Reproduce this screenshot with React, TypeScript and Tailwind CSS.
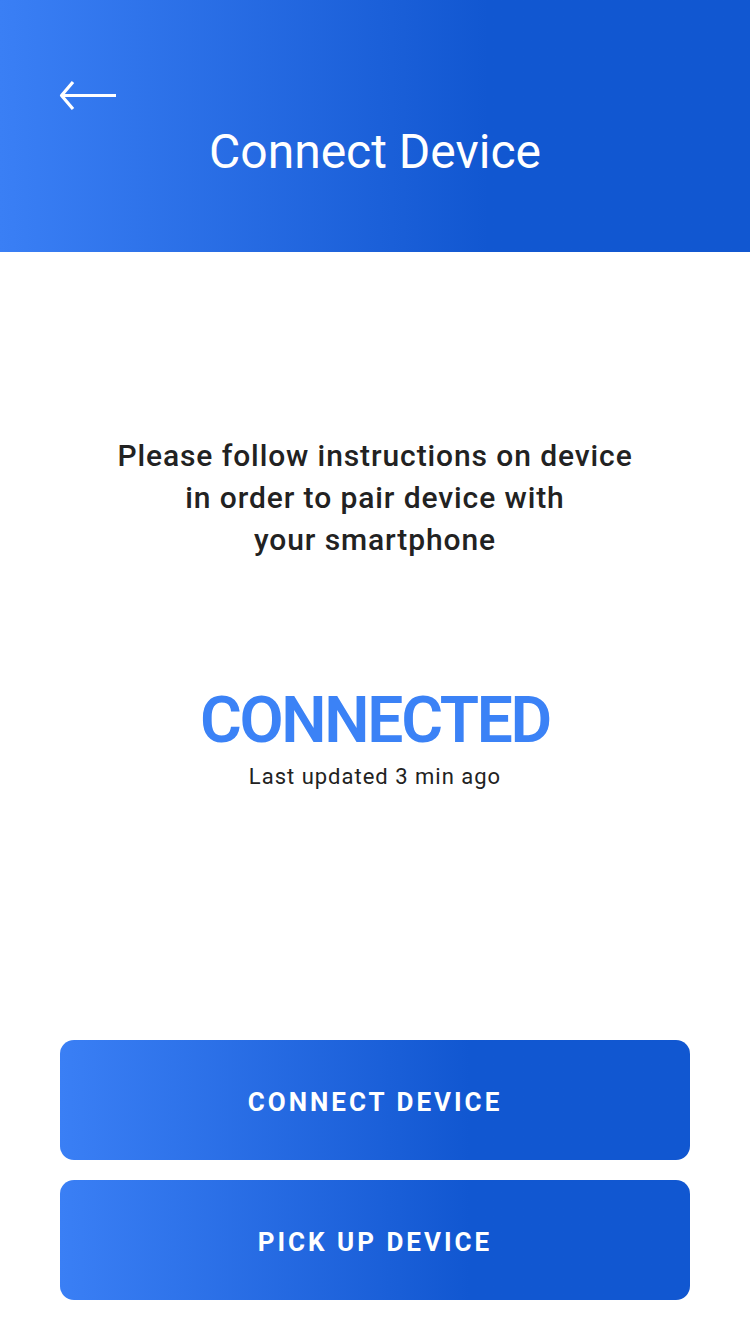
import type { ReactNode } from "react";

const font = { fontFamily: "Roboto, 'Noto Sans', sans-serif" };

function BackArrow() {
  return (
    <svg width="60" height="34" viewBox="0 0 60 34" fill="none" aria-hidden="true" className="block">
      <path
        d="M58 15.5H3.5M15 2L3.5 15.5L15 29"
        stroke="white"
        strokeWidth="3.2"
        strokeLinecap="butt"
        strokeLinejoin="round"
      />
    </svg>
  );
}

function GradientButton({ children }: { children: ReactNode }) {
  return (
    <button
      type="button"
      className="flex h-[120px] w-full items-center justify-center rounded-[14px] bg-linear-to-r from-[#3a7ff5] from-0% to-[#1157d1] to-65% pt-[4px] text-[26px] font-bold tracking-[3px] text-white"
    >
      {children}
    </button>
  );
}

export default function App() {
  return (
    <div className="flex min-h-screen flex-col bg-white" style={font}>
      <header className="flex h-[252px] flex-col bg-linear-to-r from-[#3a7ff5] from-0% to-[#1157d1] to-65%">
        <button type="button" aria-label="Back" className="ml-[58px] mt-[80px] self-start">
          <BackArrow />
        </button>
        <h1 className="mt-[10px] text-center text-[48px] font-normal leading-[56px] text-white">
          Connect Device
        </h1>
      </header>

      <main className="flex flex-1 flex-col items-center">
        <p className="mt-[183px] text-center text-[30px] font-medium leading-[42px] tracking-[0.9px] text-[#222222]">
          Please follow instructions on device
          <br />
          in order to pair device with
          <br />
          your smartphone
        </p>

        <div className="mt-[128px] text-[64px] font-semibold leading-[64px] tracking-[-2.3px] text-[#3b82f6]">
          CONNECTED
        </div>
        <div className="mt-[13px] text-[22px] leading-[22px] tracking-[1px] text-[#222222]">
          Last updated 3 min ago
        </div>
      </main>

      <div className="flex flex-col gap-[20px] px-[60px] pb-[34px]">
        <GradientButton>CONNECT DEVICE</GradientButton>
        <GradientButton>PICK UP DEVICE</GradientButton>
      </div>
    </div>
  );
}
